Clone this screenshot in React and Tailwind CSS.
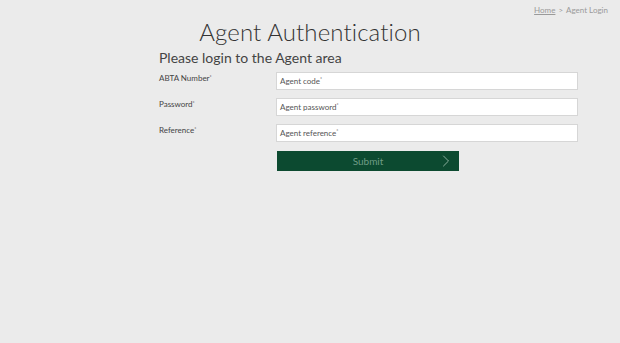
import { ChevronRight } from "lucide-react";

const fields = [
  { label: "ABTA Number", placeholder: "Agent code" },
  { label: "Password", placeholder: "Agent password" },
  { label: "Reference", placeholder: "Agent reference" },
];

export default function App() {
  return (
    <div className="min-h-[343px] w-[620px] bg-[#ebebeb] font-['Lato',sans-serif] text-[#333]">
      <div className="flex justify-end pr-[12px] pt-[5px] text-[8px] leading-[10px] text-[#9a9a9a]">
        <a className="underline">Home</a>
        <span className="mx-[3px]">&gt;</span>
        <span>Agent Login</span>
      </div>

      <h1 className="mt-[3px] text-center text-[24px] font-light leading-[28px] tracking-[0.1px] text-[#333]">
        Agent Authentication
      </h1>

      <div className="pl-[159px]">
        <h2 className="mt-[3px] text-[14px] leading-[17px] text-[#444]">
          Please login to the Agent area
        </h2>

        <div className="mt-[6px] flex flex-col gap-[8px]">
          {fields.map((f) => (
            <div key={f.label} className="flex items-start">
              <label className="w-[117px] pt-[1px] text-[8px] leading-[10px] text-[#444]">
                {f.label}
                <sup className="text-[5px]">*</sup>
              </label>
              <div className="flex h-[18px] w-[302px] items-center border border-[#d6d6d6] bg-white pl-[3px] text-[8px] text-[#555]">
                {f.placeholder}
                <sup className="text-[5px]">*</sup>
              </div>
            </div>
          ))}
        </div>

        <button className="relative ml-[118px] mt-[9px] flex h-[20px] w-[182px] items-center justify-center bg-[#0c4a30] text-[10px] text-[#6f9c85]">
          Submit
          <ChevronRight className="absolute right-[3px] top-0 h-[20px] w-[20px] text-[#a4c2b2]" strokeWidth={1} />
        </button>
      </div>
    </div>
  );
}
